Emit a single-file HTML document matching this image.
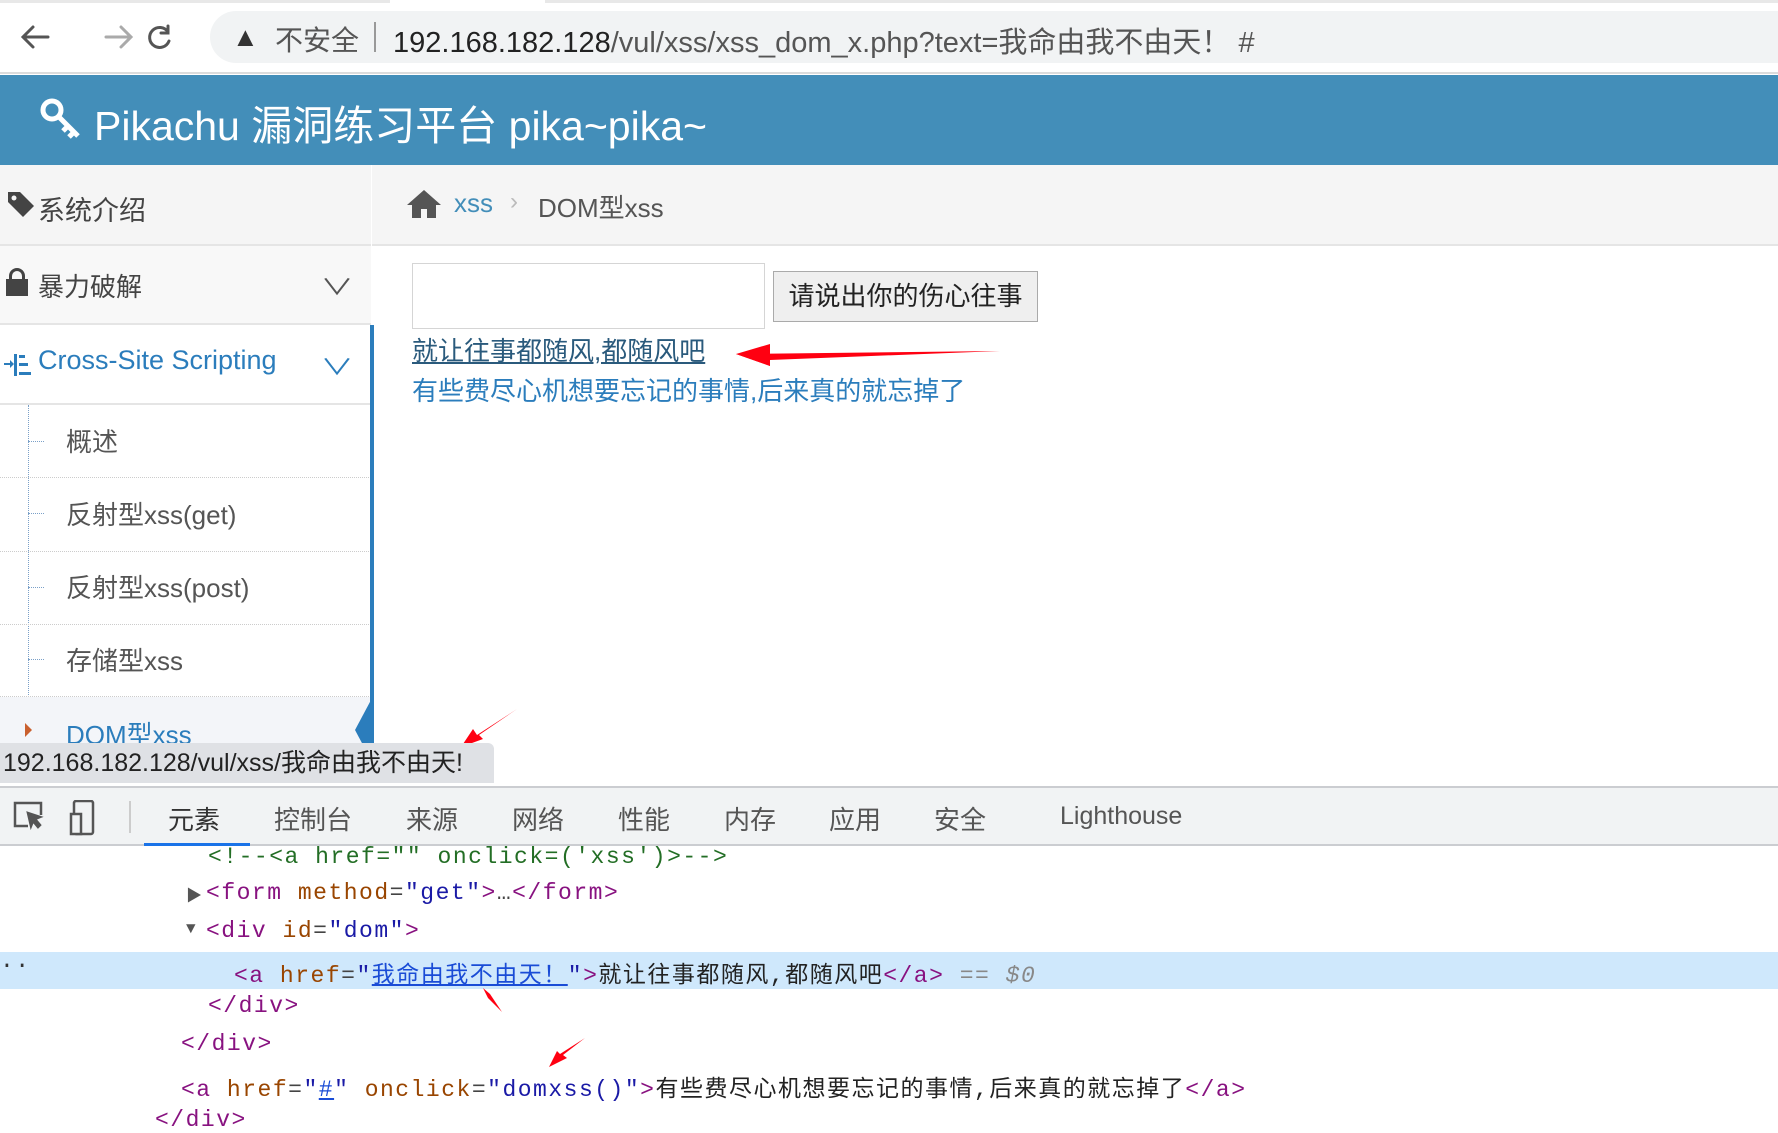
<!DOCTYPE html>
<html><head><meta charset="utf-8"><style>
*{margin:0;padding:0;box-sizing:border-box}
body{width:1778px;height:1131px;overflow:hidden;background:#fff;font-family:"Liberation Sans","Noto Sans CJK SC",sans-serif;position:relative;color:#444}
.a{position:absolute;white-space:nowrap}
.mono{font-family:"Liberation Mono","Noto Sans CJK SC",monospace;font-size:23px;letter-spacing:1.5px}
.tg{color:#881280}.at{color:#994500}.av{color:#1a1aa6}.gr{color:#888}
</style></head><body>
<!-- browser bar -->
<div class="a" style="left:0;top:0;width:1778px;height:74px;background:#fff;border-bottom:2px solid #dcdcdc"></div>
<div class="a" style="left:0;top:0;width:390px;height:3px;background:#e8e8e8"></div>
<div class="a" style="left:545px;top:0;width:1233px;height:3px;background:#e8e8e8"></div>
<svg class="a" style="left:18px;top:22px" width="160" height="30"><g fill="none" stroke-width="3" stroke-linecap="round"><path d="M30 15H6M15 5L5 15l10 10" stroke="#555"/><path d="M88 15h24M103 5l10 10-10 10" stroke="#aaa"/><path d="M162 10a10 10 0 1 0 1 9" stroke="#555" transform="translate(-12 0)"/><path d="M150 4v7h-7" stroke="#555"/></g></svg>
<div class="a" style="left:210px;top:11px;width:1568px;height:52px;background:#f1f3f4;border-radius:26px 0 0 26px"></div>
<div class="a" style="left:232px;top:22px;font-size:27px;color:#333">▲</div>
<div class="a" style="left:275px;top:19px;font-size:28px;color:#555">不安全</div>
<div class="a" style="left:374px;top:22px;width:2px;height:30px;background:#999"></div>
<div class="a" style="left:393px;top:19px;font-size:29px;color:#222">192.168.182.128<span style="color:#555">/vul/xss/xss_dom_x.php?text=我命由我不由天！ #</span></div>
<!-- header -->
<div class="a" style="left:0;top:75px;width:1778px;height:90px;background:#438eb9"></div>
<svg class="a" style="left:40px;top:98px" width="42" height="42"><circle cx="12" cy="12" r="9" fill="none" stroke="#fff" stroke-width="5"/><path d="M18 18l20 20M28 28l-5 5M34 34l-5 5" stroke="#fff" stroke-width="5" fill="none"/></svg>
<div class="a" style="left:94px;top:92px;font-size:41px;color:#fff">Pikachu 漏洞练习平台 pika~pika~</div>
<!-- breadcrumb -->
<div class="a" style="left:372px;top:165px;width:1406px;height:81px;background:#f5f5f5;border-bottom:2px solid #e5e5e5"></div>
<svg class="a" style="left:406px;top:188px" width="36" height="32"><path d="M18 2L1 17h5v13h9v-9h6v9h9V17h5z" fill="#555"/></svg>
<div class="a" style="left:454px;top:188px;font-size:26px;color:#438eb9">xss</div>
<div class="a" style="left:510px;top:188px;font-size:24px;color:#bbb">›</div>
<div class="a" style="left:538px;top:188px;font-size:26px;color:#555">DOM型xss</div>
<!-- sidebar -->
<div class="a" style="left:0;top:165px;width:371px;height:578px;background:#f8f8f8;border-right:1px solid #ddd"></div>
<div class="a" style="left:0;top:165px;width:371px;height:81px;background:#f5f5f5;border-bottom:2px solid #e5e5e5"></div>
<svg class="a" style="left:6px;top:190px" width="32" height="30"><path d="M2 2h12l14 14-11 11L2 12z" fill="#444"/><circle cx="8" cy="8" r="2.5" fill="#f5f5f5"/></svg>
<div class="a" style="left:38px;top:189px;font-size:27px;color:#444">系统介绍</div>
<div class="a" style="left:0;top:246px;width:371px;height:79px;background:#f8f8f8;border-bottom:2px solid #e5e5e5"></div>
<div class="a" style="left:6px;top:268px;width:22px;height:28px"><div style="position:absolute;left:3px;top:0;width:16px;height:14px;border:3px solid #444;border-bottom:none;border-radius:8px 8px 0 0"></div><div style="position:absolute;left:0;top:11px;width:22px;height:17px;background:#444"></div></div>
<div class="a" style="left:38px;top:267px;font-size:26px;color:#444">暴力破解</div>
<div class="a" style="left:326px;top:270px;font-size:22px;color:#555;transform:scaleX(1.5)">∨</div>
<div class="a" style="left:0;top:325px;width:371px;height:80px;background:#fff;border-bottom:2px solid #e5e5e5"></div>
<svg class="a" style="left:4px;top:351px" width="28" height="28"><g fill="#2b7dbc"><rect x="0" y="12" width="8" height="2"/><path d="M6 9l4 4-4 4z"/><rect x="10" y="3" width="3" height="22"/><rect x="15" y="4" width="6" height="3"/><rect x="15" y="12" width="9" height="3"/><rect x="15" y="21" width="12" height="3"/></g></svg>
<div class="a" style="left:38px;top:345px;font-size:27px;color:#2b7dbc">Cross-Site Scripting</div>
<div class="a" style="left:326px;top:350px;font-size:22px;color:#2b7dbc;transform:scaleX(1.5)">∨</div>
<div class="a" style="left:0;top:405px;width:371px;height:338px;background:#fff"></div>
<div class="a" style="left:28px;top:405px;height:338px;border-left:1px dotted #7aa0c8"></div>
<div class="a" style="left:0;top:477px;width:371px;border-top:1px dotted #ccc"></div>
<div class="a" style="left:0;top:551px;width:371px;border-top:1px dotted #ccc"></div>
<div class="a" style="left:0;top:624px;width:371px;border-top:1px dotted #ccc"></div>
<div class="a" style="left:0;top:696px;width:371px;border-top:1px dotted #ccc"></div>
<div class="a" style="left:28px;top:441px;width:16px;border-top:1px dotted #7aa0c8"></div>
<div class="a" style="left:28px;top:513px;width:16px;border-top:1px dotted #7aa0c8"></div>
<div class="a" style="left:28px;top:587px;width:16px;border-top:1px dotted #7aa0c8"></div>
<div class="a" style="left:28px;top:659px;width:16px;border-top:1px dotted #7aa0c8"></div>
<div class="a" style="left:66px;top:422px;font-size:26px;color:#555">概述</div>
<div class="a" style="left:66px;top:495px;font-size:26px;color:#555">反射型xss(get)</div>
<div class="a" style="left:66px;top:568px;font-size:26px;color:#555">反射型xss(post)</div>
<div class="a" style="left:66px;top:641px;font-size:26px;color:#555">存储型xss</div>
<div class="a" style="left:0;top:697px;width:371px;height:46px;background:#f3f5f9"></div>
<div class="a" style="left:25px;top:723px;width:0;height:0;border-left:7px solid #c9602e;border-top:7px solid transparent;border-bottom:7px solid transparent"></div>
<div class="a" style="left:66px;top:715px;font-size:26px;color:#2b7dbc">DOM型xss</div>
<div class="a" style="left:370px;top:325px;width:4px;height:418px;background:#2b7dbc"></div>
<div class="a" style="left:355px;top:700px;width:0;height:0;border-right:16px solid #2b7dbc;border-top:30px solid transparent;border-bottom:30px solid transparent"></div>
<!-- content -->
<div class="a" style="left:412px;top:263px;width:353px;height:66px;border:1px solid #d5d5d5;background:#fff"></div>
<div class="a" style="left:773px;top:271px;width:265px;height:51px;border:1px solid #aaa;background:#efefef;font-size:26px;color:#222;text-align:center;line-height:49px">请说出你的伤心往事</div>
<div class="a" style="left:412px;top:331px;font-size:26px;color:#2a5a7c;text-decoration:underline">就让往事都随风,都随风吧</div>
<div class="a" style="left:412px;top:371px;font-size:26px;color:#2b7dbc">有些费尽心机想要忘记的事情,后来真的就忘掉了</div>
<svg class="a" style="left:730px;top:340px" width="280" height="30"><path d="M6 14L270 11 40 20 40 26z" fill="#f01"/><path d="M6 14L40 4 40 26z" fill="#f01"/></svg>
<svg class="a" style="left:455px;top:705px" width="70" height="45"><path d="M62 4L22 30 18 24 6 42 28 34 24 30z" fill="#f01"/></svg>
<!-- status -->
<div class="a" style="left:0;top:743px;width:494px;height:40px;background:#dfe1e5;border-radius:0 6px 0 0;font-size:25px;color:#222;line-height:40px;padding-left:3px">192.168.182.128/vul/xss/我命由我不由天!</div>
<!-- devtools -->
<div class="a" style="left:0;top:786px;width:1778px;height:60px;background:#f1f3f4;border-top:2px solid #cbcdd1;border-bottom:2px solid #cbcdd1"></div>
<svg class="a" style="left:12px;top:800px" width="110" height="36"><g fill="none" stroke="#555" stroke-width="2.5"><path d="M16 26H3V3h26v12"/><path d="M16 13l12 4-5 2 5 6-2 2-5-6-2 5z" fill="#555"/><rect x="62" y="1" width="19" height="33" rx="2"/><rect x="59" y="14" width="10" height="20" fill="#f1f3f4"/></g></svg>
<div class="a" style="left:129px;top:801px;width:2px;height:32px;background:#ccc"></div>
<div class="a" style="left:144px;top:843px;width:106px;height:3px;background:#1a73e8"></div>
<div class="a" style="top:800px;font-size:26px;color:#333;left:168px">元素</div>
<div class="a" style="top:800px;font-size:26px;color:#555;left:274px">控制台</div>
<div class="a" style="top:800px;font-size:26px;color:#555;left:406px">来源</div>
<div class="a" style="top:800px;font-size:26px;color:#555;left:512px">网络</div>
<div class="a" style="top:800px;font-size:26px;color:#555;left:618px">性能</div>
<div class="a" style="top:800px;font-size:26px;color:#555;left:724px">内存</div>
<div class="a" style="top:800px;font-size:26px;color:#555;left:829px">应用</div>
<div class="a" style="top:800px;font-size:26px;color:#555;left:934px">安全</div>
<div class="a" style="top:802px;font-size:25px;color:#555;left:1060px">Lighthouse</div>
<div class="a" style="left:0;top:952px;width:1778px;height:37px;background:#cfe8fc"></div>
<div class="a mono" style="left:0;top:953px;color:#333">··</div>
<div class="a mono" style="left:208px;top:844px;color:#236e25">&lt;!--&lt;a href="" onclick=('xss')&gt;--&gt;</div>
<div class="a mono" style="left:186px;top:882px;color:#555;font-size:16px">▶</div>
<div class="a mono" style="left:206px;top:880px"><span class="tg">&lt;</span><span class="tg">form</span> <span class="at">method</span>=<span class="av">"get"</span><span class="tg">&gt;</span>…<span class="tg">&lt;/form&gt;</span></div>
<div class="a mono" style="left:186px;top:920px;color:#555;font-size:16px">▼</div>
<div class="a mono" style="left:206px;top:918px"><span class="tg">&lt;div</span> <span class="at">id</span>=<span class="av">"dom"</span><span class="tg">&gt;</span></div>
<div class="a mono" style="left:234px;top:955px"><span class="tg">&lt;a</span> <span class="at">href</span>=<span class="av">"</span><span style="color:#1a4cd6;text-decoration:underline">我命由我不由天！</span><span class="av">"</span><span class="tg">&gt;</span><span style="color:#222">就让往事都随风,都随风吧</span><span class="tg">&lt;/a&gt;</span> <span class="gr">== <i>$0</i></span></div>
<div class="a mono" style="left:208px;top:993px" ><span class="tg">&lt;/div&gt;</span></div>
<div class="a mono" style="left:181px;top:1031px"><span class="tg">&lt;/div&gt;</span></div>
<div class="a mono" style="left:181px;top:1069px"><span class="tg">&lt;a</span> <span class="at">href</span>=<span class="av">"</span><span style="color:#1a4cd6;text-decoration:underline">#</span><span class="av">"</span> <span class="at">onclick</span>=<span class="av">"domxss()"</span><span class="tg">&gt;</span><span style="color:#222">有些费尽心机想要忘记的事情,后来真的就忘掉了</span><span class="tg">&lt;/a&gt;</span></div>
<div class="a mono" style="left:155px;top:1107px"><span class="tg">&lt;/div&gt;</span></div>
<svg class="a" style="left:480px;top:985px" width="30" height="30"><path d="M3 3l7 6 12 18-14-14z" fill="#f01"/></svg>
<svg class="a" style="left:545px;top:1035px" width="45" height="35"><path d="M40 3L18 20 22 23 4 32 12 16 15 19z" fill="#f01"/></svg>
</body></html>
